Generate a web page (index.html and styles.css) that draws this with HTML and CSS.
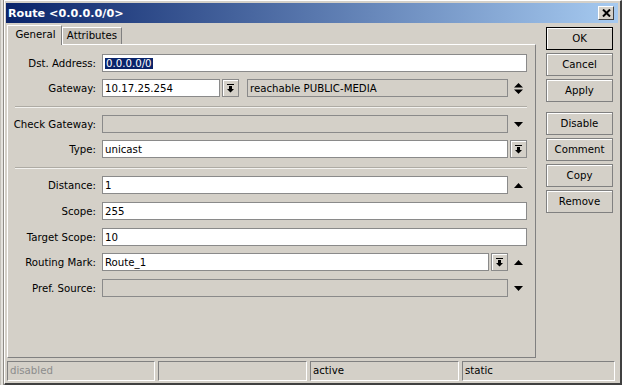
FILE: index.html
```html
<!DOCTYPE html>
<html lang="en">
<head>
<meta charset="UTF-8">
<title>Route &lt;0.0.0.0/0&gt;</title>
<link rel="stylesheet" href="styles.css">
</head>
<body>
<div class="screen">
  <div class="behind"></div>
  <div class="dialog">
    <div class="titlebar">
      <span class="title">Route &lt;0.0.0.0/0&gt;</span>
      <span class="close"><svg width="9" height="8" viewBox="0 0 9 8"><path d="M1 0.5L8 7.5M8 0.5L1 7.5" stroke="#000" stroke-width="2"/></svg></span>
    </div>
    <div class="main">
      <div class="tabbox">
        <div class="tabs">
          <div class="tab active">General</div>
          <div class="tab">Attributes</div>
        </div>
        <div class="panel">
          <div class="row">
            <div class="label">Dst. Address:</div>
            <div class="ctrl"><div class="field"><span class="sel">0.0.0.0/0</span></div></div>
          </div>
          <div class="row">
            <div class="label">Gateway:</div>
            <div class="ctrl">
              <div class="field gw">10.17.25.254</div>
              <div class="dd"><svg width="7" height="9" viewBox="0 0 7 9"><path d="M0 0h7v1H0zM2 2h3v3H2zM0 5h7L3.5 8.5z"/></svg></div>
              <div class="field off reach">reachable PUBLIC-MEDIA</div>
              <div class="arr"><svg width="9" height="11" viewBox="0 0 9 11"><path d="M0 4.5h9L4.5 0zM0 6.5h9L4.5 11z"/></svg></div>
            </div>
          </div>
          <div class="sep"></div>
          <div class="row">
            <div class="label">Check Gateway:</div>
            <div class="ctrl">
              <div class="field off"></div>
              <div class="arr"><svg width="9" height="5" viewBox="0 0 9 5"><path d="M0 0h9L4.5 5z"/></svg></div>
            </div>
          </div>
          <div class="row">
            <div class="label">Type:</div>
            <div class="ctrl">
              <div class="field">unicast</div>
              <div class="dd"><svg width="7" height="9" viewBox="0 0 7 9"><path d="M0 0h7v1H0zM2 2h3v3H2zM0 5h7L3.5 8.5z"/></svg></div>
            </div>
          </div>
          <div class="sep"></div>
          <div class="row wide">
            <div class="label">Distance:</div>
            <div class="ctrl">
              <div class="field">1</div>
              <div class="arr"><svg width="9" height="5" viewBox="0 0 9 5"><path d="M0 5h9L4.5 0z"/></svg></div>
            </div>
          </div>
          <div class="row wide">
            <div class="label">Scope:</div>
            <div class="ctrl"><div class="field">255</div></div>
          </div>
          <div class="row">
            <div class="label">Target Scope:</div>
            <div class="ctrl"><div class="field">10</div></div>
          </div>
          <div class="row wide">
            <div class="label">Routing Mark:</div>
            <div class="ctrl">
              <div class="field">Route_1</div>
              <div class="dd"><svg width="7" height="9" viewBox="0 0 7 9"><path d="M0 0h7v1H0zM2 2h3v3H2zM0 5h7L3.5 8.5z"/></svg></div>
              <div class="arr"><svg width="9" height="5" viewBox="0 0 9 5"><path d="M0 5h9L4.5 0z"/></svg></div>
            </div>
          </div>
          <div class="row">
            <div class="label">Pref. Source:</div>
            <div class="ctrl">
              <div class="field off"></div>
              <div class="arr"><svg width="9" height="5" viewBox="0 0 9 5"><path d="M0 0h9L4.5 5z"/></svg></div>
            </div>
          </div>
        </div>
      </div>
      <div class="buttons">
        <div class="btn default">OK</div>
        <div class="btn">Cancel</div>
        <div class="btn">Apply</div>
        <div class="btn spaced">Disable</div>
        <div class="btn">Comment</div>
        <div class="btn">Copy</div>
        <div class="btn">Remove</div>
      </div>
    </div>
    <div class="statusbar">
      <div class="cell c1 dim">disabled</div>
      <div class="cell c2"></div>
      <div class="cell c3">active</div>
      <div class="cell c4">static</div>
    </div>
  </div>
</div>
</body>
</html>
```

FILE: styles.css
```css
* { box-sizing: border-box; }

body {
  margin: 0;
  background: #d4d0c8;
  font-family: "DejaVu Sans", sans-serif;
  font-size: 10.2px;
  color: #000;
}

.screen { display: flex; width: 622px; height: 385px; }

/* window behind the dialog */
.behind {
  width: 4px;
  background: #e4e2dd;
  border-left: 1px solid #c4c1ba;
  border-right: 1px solid #8e8b85;
}

.dialog {
  flex: 1;
  display: flex;
  flex-direction: column;
  border-top: 1px solid #ffffff;
  border-left: 1px solid #ffffff;
  border-right: 2px solid #404040;
  border-bottom: 2px solid #404040;
  padding: 2px 2px 2px 1px;
}

.titlebar {
  height: 20px;
  display: flex;
  align-items: center;
  padding: 0 4px 0 2px;
  background: linear-gradient(to right, #0a246a, #a6caf0);
  color: #fff;
  font-weight: bold;
  font-size: 11.2px;
}
.title { flex: 1; }
.close {
  width: 16px;
  height: 14px;
  background: #d4d0c8;
  border: 1px solid;
  border-color: #ffffff #404040 #404040 #ffffff;
  display: flex;
  align-items: center;
  justify-content: center;
}

.main { display: flex; margin-top: 2px; height: 333px; }

.tabbox { width: 529px; margin-left: 1px; display: flex; flex-direction: column; }
.tabs { display: flex; align-items: flex-end; height: 19px; }
.tab {
  height: 17px;
  line-height: 15px;
  text-align: center;
  border-top: 1px solid #ffffff;
  border-left: 1px solid #ffffff;
  border-right: 1px solid #808080;
  background: #c8c4bc;
}
.tab.active {
  width: 55px;
  height: 20px;
  line-height: 17px;
  margin-bottom: -1px;
  padding-left: 2px;
  background: #d4d0c8;
  position: relative;
}
.tab:not(.active) { width: 60px; }

.panel {
  flex: 1;
  display: flex;
  flex-direction: column;
  border: 1px solid;
  border-color: #ffffff #808080 #808080 #ffffff;
  padding: 9px 8px 0 0;
}

.row { display: flex; align-items: center; height: 18px; flex: none; margin-bottom: 7px; }
.row.wide { margin-bottom: 8px; }
.label { width: 88px; margin-right: 6px; text-align: right; white-space: nowrap; }
.ctrl { flex: 1; display: flex; height: 18px; }

.field {
  flex: 1;
  height: 18px;
  line-height: 17px;
  padding: 0 2px;
  background: #fff;
  border: 1px solid #8a8a8a;
  white-space: nowrap;
}
.field.off { background: #d4d0c8; }
.field.gw { flex: 0 0 118px; }
.field.reach { margin-left: 8px; }

.sel { background: #0a246a; color: #fff; padding: 0 1px; }

.dd {
  width: 17px;
  margin-left: 2px;
  border: 1px solid #8a8a8a;
  box-shadow: inset 1px 1px #ffffff;
  display: flex;
  align-items: center;
  justify-content: center;
}
.arr { width: 19px; display: flex; align-items: center; justify-content: center; padding-left: 1px; }

.sep {
  flex: none;
  border-top: 1px solid #aeaba4;
  border-bottom: 1px solid #f2f1ee;
  margin: 2px 0 7px 7px;
}

.buttons {
  width: 67px;
  margin-left: 10px;
  padding-top: 2px;
  display: flex;
  flex-direction: column;
  gap: 3px;
}
.btn {
  height: 23px;
  display: flex;
  align-items: center;
  justify-content: center;
  border: 1px solid #808080;
  box-shadow: inset 1px 1px #ffffff;
}
.btn.default { border-color: #000; }
.btn.spaced { margin-top: 7px; }

.statusbar { display: flex; gap: 3px; margin-top: 3px; height: 20px; padding: 0 3px 0 1px; }
.cell {
  height: 20px;
  line-height: 18px;
  padding-left: 2px;
  border: 1px solid;
  border-color: #808080 #ffffff #ffffff #808080;
}
.c1 { width: 148px; }
.c2, .c3 { width: 149px; }
.c4 { flex: 1; }
.dim { color: #8c8c8c; }
```
